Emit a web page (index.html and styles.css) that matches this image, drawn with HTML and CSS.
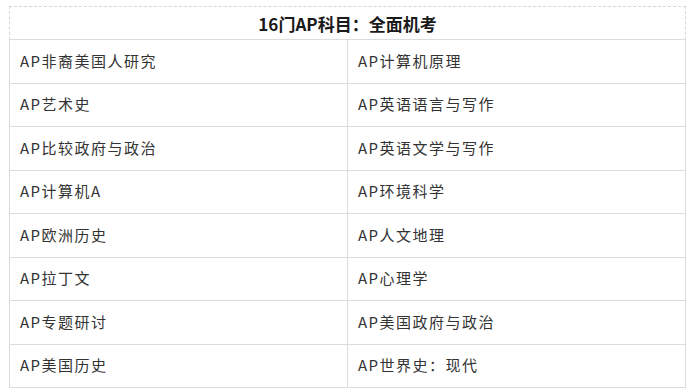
FILE: index.html
```html
<!DOCTYPE html>
<html lang="zh">
<head>
<meta charset="utf-8">
<link rel="stylesheet" href="styles.css">
</head>
<body>
<div class="table">
  <div class="head">16门AP科目：全面机考</div>
  <div class="grid">
    <div class="cell">AP非裔美国人研究</div>
    <div class="cell">AP计算机原理</div>
    <div class="cell">AP艺术史</div>
    <div class="cell">AP英语语言与写作</div>
    <div class="cell">AP比较政府与政治</div>
    <div class="cell">AP英语文学与写作</div>
    <div class="cell">AP计算机A</div>
    <div class="cell">AP环境科学</div>
    <div class="cell">AP欧洲历史</div>
    <div class="cell">AP人文地理</div>
    <div class="cell">AP拉丁文</div>
    <div class="cell">AP心理学</div>
    <div class="cell">AP专题研讨</div>
    <div class="cell">AP美国政府与政治</div>
    <div class="cell">AP美国历史</div>
    <div class="cell">AP世界史：现代</div>
  </div>
</div>
</body>
</html>
```

FILE: styles.css
```css
html, body {
  margin: 0;
  padding: 0;
  background: #fff;
}
body {
  padding: 6px 0 0 9px;
  font-family: "Noto Sans CJK SC", "Noto Sans", sans-serif;
}
.table {
  width: 677px;
}
.head {
  height: 32px;
  border: 1px dashed #d6d6d6;
  border-bottom: 1px solid #dcdcdc;
  display: flex;
  align-items: center;
  justify-content: center;
  font-size: 17px;
  font-weight: bold;
  color: #1a1a1a;
  box-sizing: content-box;
}
.grid {
  display: grid;
  grid-template-columns: 339px 338px;
  grid-auto-rows: 43.5px;
}
.cell {
  box-sizing: border-box;
  border-bottom: 1px solid #dcdcdc;
  border-right: 1px solid #dcdcdc;
  display: flex;
  align-items: center;
  padding-left: 10px;
  padding-bottom: 2px;
  font-size: 15px;
  letter-spacing: 1.5px;
  color: #333;
}
.cell:nth-child(odd) {
  border-left: 1px solid #dcdcdc;
  padding-left: 10px;
}
```
